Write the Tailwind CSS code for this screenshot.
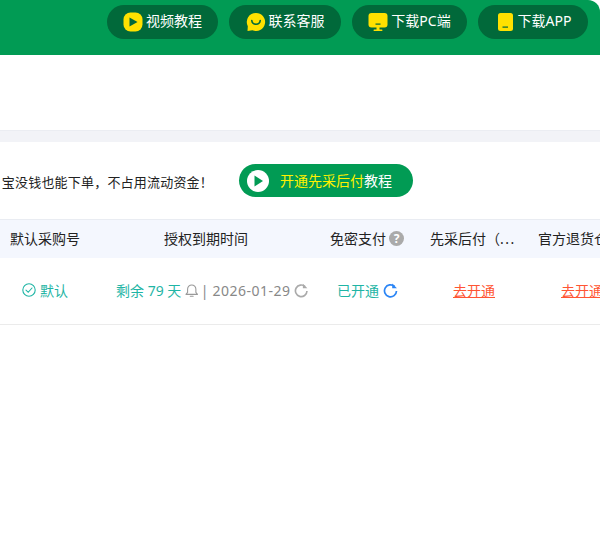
<!DOCTYPE html>
<html lang="zh-CN">

<head>
    <meta charset="UTF-8">
    <meta name="viewport" content="width=device-width, initial-scale=1">
    <title>授权管理</title>
    <script src="https://cdn.jsdelivr.net/npm/@tailwindcss/browser@4"></script>
</head>

<body class="bg-white h-[533px] w-[600px] overflow-hidden font-['Noto_Sans','Noto_Sans_CJK_SC',sans-serif] text-[14px] text-[#222]">

    <!-- 顶部绿色条 -->
    <header class="h-[55px] bg-[#019b54] rounded-tr-[12px] flex justify-end items-start pt-[5px] pr-[12px] gap-[11px] text-white">
        <a class="w-[111px] h-[34px] pb-[1px] rounded-full bg-[#01693a] flex items-center justify-center gap-[3px]">
            <svg class="w-[20px] h-[20px]" viewBox="0 0 20 20">
                <rect x="0.5" y="0.5" width="19" height="19" rx="7" fill="#ffe100" />
                <path d="M6.5 5.5 L14.5 10 L6.5 14.5 Z" fill="#01693a" />
            </svg>
            <span class="-mt-[2px]">视频教程</span>
        </a>
        <a class="w-[112px] h-[34px] pb-[1px] rounded-full bg-[#01693a] flex items-center justify-center gap-[3px]">
            <svg class="w-[20px] h-[20px]" viewBox="0 0 20 20">
                <path d="M10 1a9 9 0 1 1-3.6 17.2 L1.5 19 L1.8 14.2 A9 9 0 0 1 10 1Z" fill="#ffe100" />
                <path d="M5.8 8.5 C6.2 13.5 13.8 13.5 14.2 8.5" fill="none" stroke="#01693a" stroke-width="1.6" stroke-linecap="round" />
            </svg>
            <span class="-mt-[2px]">联系客服</span>
        </a>
        <a class="w-[115px] h-[34px] pb-[1px] rounded-full bg-[#01693a] flex items-center justify-center gap-[3px]">
            <svg class="w-[20px] h-[20px]" viewBox="0 0 20 20">
                <rect x="0.5" y="1" width="19" height="14.5" rx="3" fill="#ffe100" />
                <rect x="8.5" y="15" width="3" height="3" fill="#ffe100" />
                <rect x="5.5" y="17.5" width="9" height="1.5" rx="0.7" fill="#ffe100" />
                <rect x="7.5" y="11.5" width="5" height="1.2" fill="#01693a" />
            </svg>
            <span class="-mt-[2px]">下载PC端</span>
        </a>
        <a class="w-[110px] h-[34px] pb-[1px] rounded-full bg-[#01693a] flex items-center justify-center gap-[3px]">
            <svg class="w-[20px] h-[20px]" viewBox="0 0 20 20">
                <rect x="3" y="1" width="15" height="18" rx="2.5" fill="#ffe100" />
                <rect x="7.5" y="14.5" width="5.5" height="1.2" fill="#01693a" />
            </svg>
            <span class="-mt-[2px]">下载APP</span>
        </a>
    </header>

    <!-- 空白区 -->
    <div class="h-[75px]"></div>
    <div class="h-[12px] bg-[#f2f3f7] border-t border-[#ebedf2]"></div>

    <!-- 提示条 -->
    <div class="h-[77px] pt-[22px] flex items-start justify-end pr-[187px] overflow-hidden">
        <span class="h-[33px] leading-[36px] whitespace-nowrap shrink-0 text-[13px] tracking-[0.2px]">宝没钱也能下单，不占用流动资金！</span>
        <a class="ml-[26px] shrink-0 w-[174px] h-[33px] rounded-full bg-[#019b54] flex items-center pl-[8px] text-white">
            <svg class="w-[22px] h-[22px]" viewBox="0 0 22 22">
                <circle cx="11" cy="11" r="11" fill="#fff" />
                <path d="M7.5 5.5 L16 11 L7.5 16.5 Z" fill="#019b54" />
            </svg>
            <span class="ml-[11px]"><span class="text-[#fff200]">开通先采后付</span>教程</span>
        </a>
    </div>

    <!-- 表格 -->
    <div class="border-t border-[#e9ecf2]">
        <div class="h-[38px] pb-[1px] bg-[#f4f7fe] flex items-center whitespace-nowrap">
            <div class="w-[104px] pl-[10px] shrink-0">默认采购号</div>
            <div class="w-[204px] text-center shrink-0">授权到期时间</div>
            <div class="w-[122px] pl-[22px] shrink-0 flex items-center gap-[3px]">免密支付
                <span class="w-[15px] h-[15px] rounded-full bg-[#aaa] text-white text-[12px] font-bold leading-[15px] text-center">?</span>
            </div>
            <div class="w-[108px] shrink-0">先采后付（<span class="tracking-[1.5px]">...</span></div>
            <div class="shrink-0">官方退货仓</div>
        </div>
        <div class="h-[67px] pb-[2px] border-b border-[#ebebeb] flex items-center whitespace-nowrap">
            <div class="w-[104px] shrink-0 flex items-center pl-[22px] gap-[4px] text-[#1fb5a5]">
                <svg class="w-[14px] h-[14px]" viewBox="0 0 14 14" fill="none" stroke="#1fb5a5" stroke-width="1.1">
                    <circle cx="7" cy="7" r="6.2" />
                    <path d="M4 7.2 L6.2 9.3 L10 5" stroke-linecap="round" />
                </svg>
                <span>默认</span>
            </div>
            <div class="w-[204px] shrink-0 flex items-center pl-[12px]">
                <span class="text-[#1fb5a5]">剩余 79 天</span>
                <svg class="w-[14px] h-[15px] ml-[4px]" viewBox="0 0 14 15" fill="none" stroke="#999" stroke-width="1.1">
                    <path d="M1 11.5 H13 L11.3 9.5 V6 A4.3 4.3 0 0 0 2.7 6 V9.5 Z" stroke-linejoin="round" />
                    <path d="M5.5 13.5 H8.5" stroke-linecap="round" />
                </svg>
                <span class="text-[#888] ml-[2px]">|</span>
                <span class="text-[#888] ml-[4px] tracking-[0.5px]">2026-01-29</span>
                <svg class="w-[15px] h-[15px] ml-[3px]" viewBox="0 0 14 14" fill="none" stroke="#aaa" stroke-width="1.6">
                    <path d="M10.8 3.2 A5.6 5.6 0 1 0 12.6 7.5" />
                    <path d="M8.6 0.4 V4.8 H13 Z" fill="#aaa" stroke="none" />
                </svg>
            </div>
            <div class="w-[116px] shrink-0 flex items-center pl-[29px] gap-[4px]">
                <span class="text-[#1fb5a5]">已开通</span>
                <svg class="w-[15px] h-[15px]" viewBox="0 0 14 14" fill="none" stroke="#2b85f5" stroke-width="1.6">
                    <path d="M10.8 3.2 A5.6 5.6 0 1 0 12.6 7.5" />
                    <path d="M8.6 0.4 V4.8 H13 Z" fill="#2b85f5" stroke="none" />
                </svg>
            </div>
            <div class="w-[137px] shrink-0 pl-[29px] text-[#ff5533] underline">去开通</div>
            <div class="shrink-0 text-[#ff5533] underline">去开通</div>
        </div>
    </div>

</body>

</html>
